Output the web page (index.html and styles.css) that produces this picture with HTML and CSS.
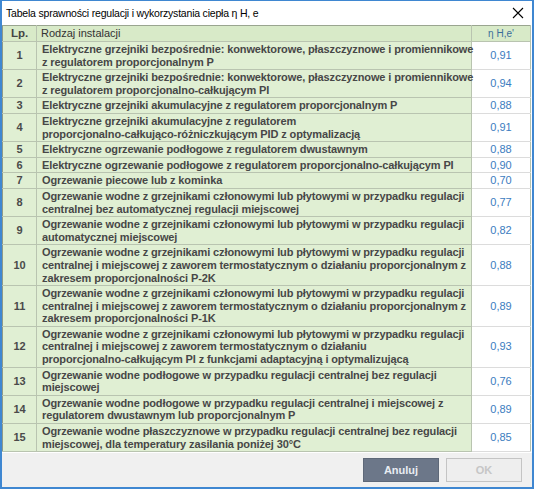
FILE: index.html
```html
<!DOCTYPE html>
<html lang="pl">
<head>
<meta charset="utf-8">
<link rel="stylesheet" href="styles.css">
</head>
<body>
<div class="window">
  <div class="titlebar">
    <span class="title">Tabela sprawności regulacji i wykorzystania ciepła η H, e</span>
    <svg class="close" width="12" height="12" viewBox="0 0 12 12"><path d="M1 1L11 11M11 1L1 11" stroke="#000" stroke-width="1.1"/></svg>
  </div>
  <div class="content">
    <table class="grid">
      <colgroup><col class="c-lp"><col class="c-desc"><col class="c-val"></colgroup>
      <thead>
        <tr><th class="lp">Lp.</th><th class="desc">Rodzaj instalacji</th><th class="val">η H,e'</th></tr>
      </thead>
      <tbody>
        <tr><td class="lp">1</td><td class="desc">Elektryczne grzejniki bezpośrednie: konwektorowe, płaszczyznowe i promiennikowe<br>z regulatorem proporcjonalnym P</td><td class="val">0,91</td></tr>
        <tr><td class="lp">2</td><td class="desc">Elektryczne grzejniki bezpośrednie: konwektorowe, płaszczyznowe i promiennikowe<br>z regulatorem proporcjonalno-całkującym PI</td><td class="val">0,94</td></tr>
        <tr><td class="lp">3</td><td class="desc">Elektryczne grzejniki akumulacyjne z regulatorem proporcjonalnym P</td><td class="val">0,88</td></tr>
        <tr><td class="lp">4</td><td class="desc">Elektryczne grzejniki akumulacyjne z regulatorem<br>proporcjonalno-całkująco-różniczkującym PID z optymalizacją</td><td class="val">0,91</td></tr>
        <tr><td class="lp">5</td><td class="desc">Elektryczne ogrzewanie podłogowe z regulatorem dwustawnym</td><td class="val">0,88</td></tr>
        <tr><td class="lp">6</td><td class="desc">Elektryczne ogrzewanie podłogowe z regulatorem proporcjonalno-całkującym PI</td><td class="val">0,90</td></tr>
        <tr><td class="lp">7</td><td class="desc">Ogrzewanie piecowe lub z kominka</td><td class="val">0,70</td></tr>
        <tr><td class="lp">8</td><td class="desc">Ogrzewanie wodne z grzejnikami członowymi lub płytowymi w przypadku regulacji<br>centralnej bez automatycznej regulacji miejscowej</td><td class="val">0,77</td></tr>
        <tr><td class="lp">9</td><td class="desc">Ogrzewanie wodne z grzejnikami członowymi lub płytowymi w przypadku regulacji<br>automatycznej miejscowej</td><td class="val">0,82</td></tr>
        <tr><td class="lp">10</td><td class="desc">Ogrzewanie wodne z grzejnikami członowymi lub płytowymi w przypadku regulacji<br>centralnej i miejscowej z zaworem termostatycznym o działaniu proporcjonalnym z<br>zakresem proporcjonalności P-2K</td><td class="val">0,88</td></tr>
        <tr><td class="lp">11</td><td class="desc">Ogrzewanie wodne z grzejnikami członowymi lub płytowymi w przypadku regulacji<br>centralnej i miejscowej z zaworem termostatycznym o działaniu proporcjonalnym z<br>zakresem proporcjonalności P-1K</td><td class="val">0,89</td></tr>
        <tr><td class="lp">12</td><td class="desc">Ogrzewanie wodne z grzejnikami członowymi lub płytowymi w przypadku regulacji<br>centralnej i miejscowej z zaworem termostatycznym o działaniu<br>proporcjonalno-całkującym PI z funkcjami adaptacyjną i optymalizującą</td><td class="val">0,93</td></tr>
        <tr><td class="lp">13</td><td class="desc">Ogrzewanie wodne podłogowe w przypadku regulacji centralnej bez regulacji<br>miejscowej</td><td class="val">0,76</td></tr>
        <tr><td class="lp">14</td><td class="desc">Ogrzewanie wodne podłogowe w przypadku regulacji centralnej i miejscowej z<br>regulatorem dwustawnym lub proporcjonalnym P</td><td class="val">0,89</td></tr>
        <tr><td class="lp">15</td><td class="desc">Ogrzewanie wodne płaszczyznowe w przypadku regulacji centralnej bez regulacji<br>miejscowej, dla temperatury zasilania poniżej 30°C</td><td class="val">0,85</td></tr>
      </tbody>
    </table>
  </div>
  <div class="footer">
    <button class="btn btn-cancel">Anuluj</button>
    <button class="btn btn-ok" disabled>OK</button>
  </div>
</div>
</body>
</html>
```

FILE: styles.css
```css
html, body {
  margin: 0;
  padding: 0;
  background: #fff;
}
.window {
  width: 534px;
  height: 489px;
  box-sizing: border-box;
  border: 2px solid #3f87d1;
  border-top-width: 1px;
  display: flex;
  flex-direction: column;
  background: #f0f0f0;
}
.titlebar {
  height: 23px;
  background: #fff;
  display: flex;
  align-items: center;
  justify-content: space-between;
  padding: 0 8px 0 4px;
  flex: none;
}
.title {
  font-family: "Liberation Sans", Arial, sans-serif;
  font-size: 10.5px;
  color: #000;
  letter-spacing: -0.2px;
}
.close {
  display: block;
}
.content {
  flex: 1;
  padding-top: 1px;
  background: #fff;
  overflow: hidden;
}
.grid {
  border-collapse: collapse;
  width: 529px;
  table-layout: fixed;
  font-family: "Liberation Sans", Arial, sans-serif;
  font-size: 11px;
  line-height: 12.6px;
}
.c-lp { width: 34px; }
.c-val { width: 59px; }
.grid th, .grid td {
  border: 1px solid #b9c4b0;
  padding: 1px 4px;
  vertical-align: middle;
}
.grid th {
  background: #d8eac8;
  font-weight: normal;
  color: #333;
  line-height: 13px;
}
.grid th.lp {
  font-weight: bold;
  color: #444;
  font-size: 11.5px;
}
.grid th.desc { text-align: left; }
.grid th.val { text-align: center; color: #3a6d9a; font-size: 10px; }
.grid td.lp {
  background: #e0efd3;
  text-align: center;
  font-weight: bold;
  color: #4a4a4a;
}
.grid td.desc {
  background: #e0efd3;
  font-weight: bold;
  color: #474747;
  white-space: nowrap;
  padding-left: 5px;
  letter-spacing: -0.12px;
}
.grid td.val {
  background: #fff;
  text-align: center;
  color: #3b7cc0;
  border-color: #b9c4b0 #b9c4b0 #dcdcdc #b9c4b0;
}
.grid tr:first-child th { border-top-color: #9aa590; }
.grid th:first-child, .grid td:first-child { border-left-color: #8f9a88; }
.footer {
  height: 34px;
  flex: none;
  background: #f0f0f0;
  border-top: 1px solid #fff;
  display: flex;
  justify-content: flex-end;
  align-items: center;
  gap: 7px;
  padding-right: 10px;
}
.btn {
  width: 76px;
  height: 24px;
  font-family: "Liberation Sans", Arial, sans-serif;
  font-size: 11px;
  font-weight: bold;
  margin: 0;
  padding: 0;
}
.btn-cancel {
  background: #6c7789;
  color: #e8ecf2;
  border: 1px solid #5e6878;
}
.btn-ok {
  background: #eeeeee;
  color: #c6c6c6;
  border: 1px solid #c4c4c4;
}
```
